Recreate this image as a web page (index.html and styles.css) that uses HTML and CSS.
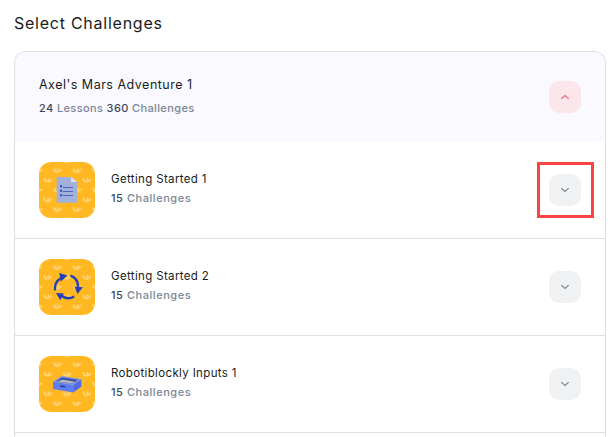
FILE: index.html
```html
<!DOCTYPE html>
<html lang="en">
<head>
    <meta charset="UTF-8">
    <meta name="viewport" content="width=device-width, initial-scale=1.0">
    <title>Select Challenges</title>
    <link rel="stylesheet" href="styles.css">
</head>
<body>
    <h1>Select Challenges</h1>

    <div class="card">
        <div class="card-header">
            <div class="info">
                <div class="course-title">Axel's Mars Adventure 1</div>
                <div class="course-meta"><b>24</b> Lessons <b>360</b> Challenges</div>
            </div>
            <button class="toggle open">
                <svg width="10" height="6" viewBox="0 0 10 6"><path d="M1.3 4.8L5 1.5l3.7 3.3"/></svg>
            </button>
        </div>

        <div class="lesson">
            <svg class="thumb" width="56" height="56" viewBox="0 0 56 56">
                <defs>
                    <path id="moon" d="M-3.6-1.6C-3.6 2.400.8 3.200 3.600-.8M-.6.2L1-1.600" fill="none" stroke="#ffdc90" stroke-width="1.4"/>
                    <!-- small crescents repeated on the yellow background -->
                    <pattern id="moons" width="19.5" height="19.5" patternUnits="userSpaceOnUse" x="9" y="-1.5">
                        <use href="#moon" x="9.75" y="9.75"/>
                        <use href="#moon" x="0" y="0"/>
                        <use href="#moon" x="19.5" y="0"/>
                        <use href="#moon" x="0" y="19.5"/>
                        <use href="#moon" x="19.5" y="19.5"/>
                    </pattern>
                </defs>
                <rect width="56" height="56" fill="#ffb822"/>
                <rect width="56" height="56" fill="url(#moons)"/>
                <path d="M17.7 15h14.500l6 5v20.700H17.700z" fill="#a2b1da"/>
                <path d="M32.200 15l6 5h-6z" fill="#dce4f6"/>
                <path d="M21 23.300h2v2h-2zM21 27.800h2v2h-2zM21 32.300h2v2h-2z" fill="#2b48bd"/>
                <path d="M24 25.500h10M24 29.500h10M24 33.500h10" stroke="#4861c4" stroke-width="1.2"/>
            </svg>
            <div class="info">
                <div class="lesson-title">Getting Started 1</div>
                <div class="lesson-meta"><b>15</b> Challenges</div>
            </div>
            <div class="highlighted">
                <button class="toggle">
                    <svg width="10" height="6" viewBox="0 0 10 6"><path d="M1.3 1.200L5 4.500l3.700-3.300"/></svg>
                </button>
            </div>
        </div>

        <div class="lesson">
            <svg class="thumb" width="56" height="56" viewBox="0 0 56 56">
                <rect width="56" height="56" fill="#ffb822"/>
                <rect width="56" height="56" fill="url(#moons)"/>
                <g fill="none" stroke="#2340b5" stroke-width="2.4">
                    <path d="M16 31.300c-.5-5.300 1.500-9.500 5.800-12"/>
                    <path d="M31.500 16.700c4.500 1.500 7.500 5.500 7.700 11"/>
                    <path d="M35.200 37.500c-4.500 2.500-9.300 2-13-1"/>
                </g>
                <g fill="#2340b5">
                    <path d="M20.300 14l8.200 2.500-6.700 6z"/>
                    <path d="M35.500 27.500l8.300.8-5.300 6.700z"/>
                    <path d="M17 34l7.800.4-3.500 6.800z"/>
                </g>
            </svg>
            <div class="info">
                <div class="lesson-title">Getting Started 2</div>
                <div class="lesson-meta"><b>15</b> Challenges</div>
            </div>
            <button class="toggle">
                <svg width="10" height="6" viewBox="0 0 10 6"><path d="M1.3 1.200L5 4.500l3.700-3.300"/></svg>
            </button>
        </div>

        <div class="lesson">
            <svg class="thumb" width="56" height="56" viewBox="0 0 56 56">
                <rect width="56" height="56" fill="#ffb822"/>
                <rect width="56" height="56" fill="url(#moons)"/>
                <path d="M14 25.700l8.700-5.700 19.600 3.300-8 5.500z" fill="#7f97f5"/>
                <path d="M17 25.200l6.200-4L39 23.800l-5.300 3.700z" fill="#3b55b0"/>
                <path d="M18.500 25.400l5-1.700 12 2-1.800 1.600z" fill="#bfbfae"/>
                <path d="M14 25.700l20.300 3v7.700L14 33z" fill="#5f7cf2"/>
                <path d="M34.300 28.700l8-5.400v7.400l-8 5.700z" fill="#4f6be2"/>
                <path d="M21.300 29.200l5 .8v1.500l-5-.8z" fill="#263a8c"/>
            </svg>
            <div class="info">
                <div class="lesson-title">Robotiblockly Inputs 1</div>
                <div class="lesson-meta"><b>15</b> Challenges</div>
            </div>
            <button class="toggle">
                <svg width="10" height="6" viewBox="0 0 10 6"><path d="M1.3 1.200L5 4.500l3.700-3.300"/></svg>
            </button>
        </div>

        <div class="lesson-next"></div>
    </div>
</body>
</html>
```

FILE: styles.css
```css
* {
    box-sizing: border-box;
}

body {
    margin: 0;
    padding: 11px 10px 0 14px;
    height: 437px;
    overflow: hidden;
    font-family: Inter, "Open Sans", sans-serif;
    background-color: #fff;
    color: #181c20;
}

h1 {
    margin: 0 0 16px;
    font-size: 16px;
    line-height: 24px;
    font-weight: 400;
    letter-spacing: 0.75px;
}

.card {
    border: 1px solid #d8e0e8;
    border-bottom: none;
    border-radius: 12px 12px 0 0;
    overflow: hidden;
}

.card-header {
    display: flex;
    align-items: center;
    height: 90px;
    padding: 0 24px;
    background-color: #faf9ff;
}

.info {
    flex: 1;
    padding-bottom: 2px;
}

.course-title {
    font-size: 12.5px;
    line-height: 25px;
    letter-spacing: 0.5px;
}

.course-meta,
.lesson-meta {
    font-size: 11px;
    font-weight: 500;
    color: #7a8696;
}

.course-meta {
    line-height: 23px;
    letter-spacing: 0.38px;
}

.course-meta b,
.lesson-meta b {
    font-weight: 500;
    color: #3b4857;
}

.lesson {
    display: flex;
    align-items: center;
    gap: 16px;
    height: 97px;
    padding: 0 24px;
    border-bottom: 1px solid #d8e0e8; /* Divider between lessons */
}

.thumb {
    border-radius: 12px;
}

.lesson-title {
    font-size: 11.5px;
    line-height: 19px;
    letter-spacing: 0.35px;
}

.lesson-meta {
    line-height: 19px;
    letter-spacing: 0.55px;
}

.toggle {
    display: flex;
    justify-content: center;
    align-items: center;
    width: 32px;
    height: 32px;
    padding: 0;
    border: none;
    border-radius: 10px;
    background-color: #f0f1f3;
    color: #77808c;
    cursor: pointer;
}

.toggle path {
    fill: none;
    stroke: currentColor;
    stroke-width: 1.1;
}

.toggle.open {
    background-color: #fbe7eb;
    color: #ee5c66;
}

/* Red frame around the button */
.highlighted {
    margin: 0 -13px 0 -12px;
    padding: 9px 10px 9px 9px;
    border: 3px solid #fa4444;
}

.lesson-next {
    height: 4px;
}
```
